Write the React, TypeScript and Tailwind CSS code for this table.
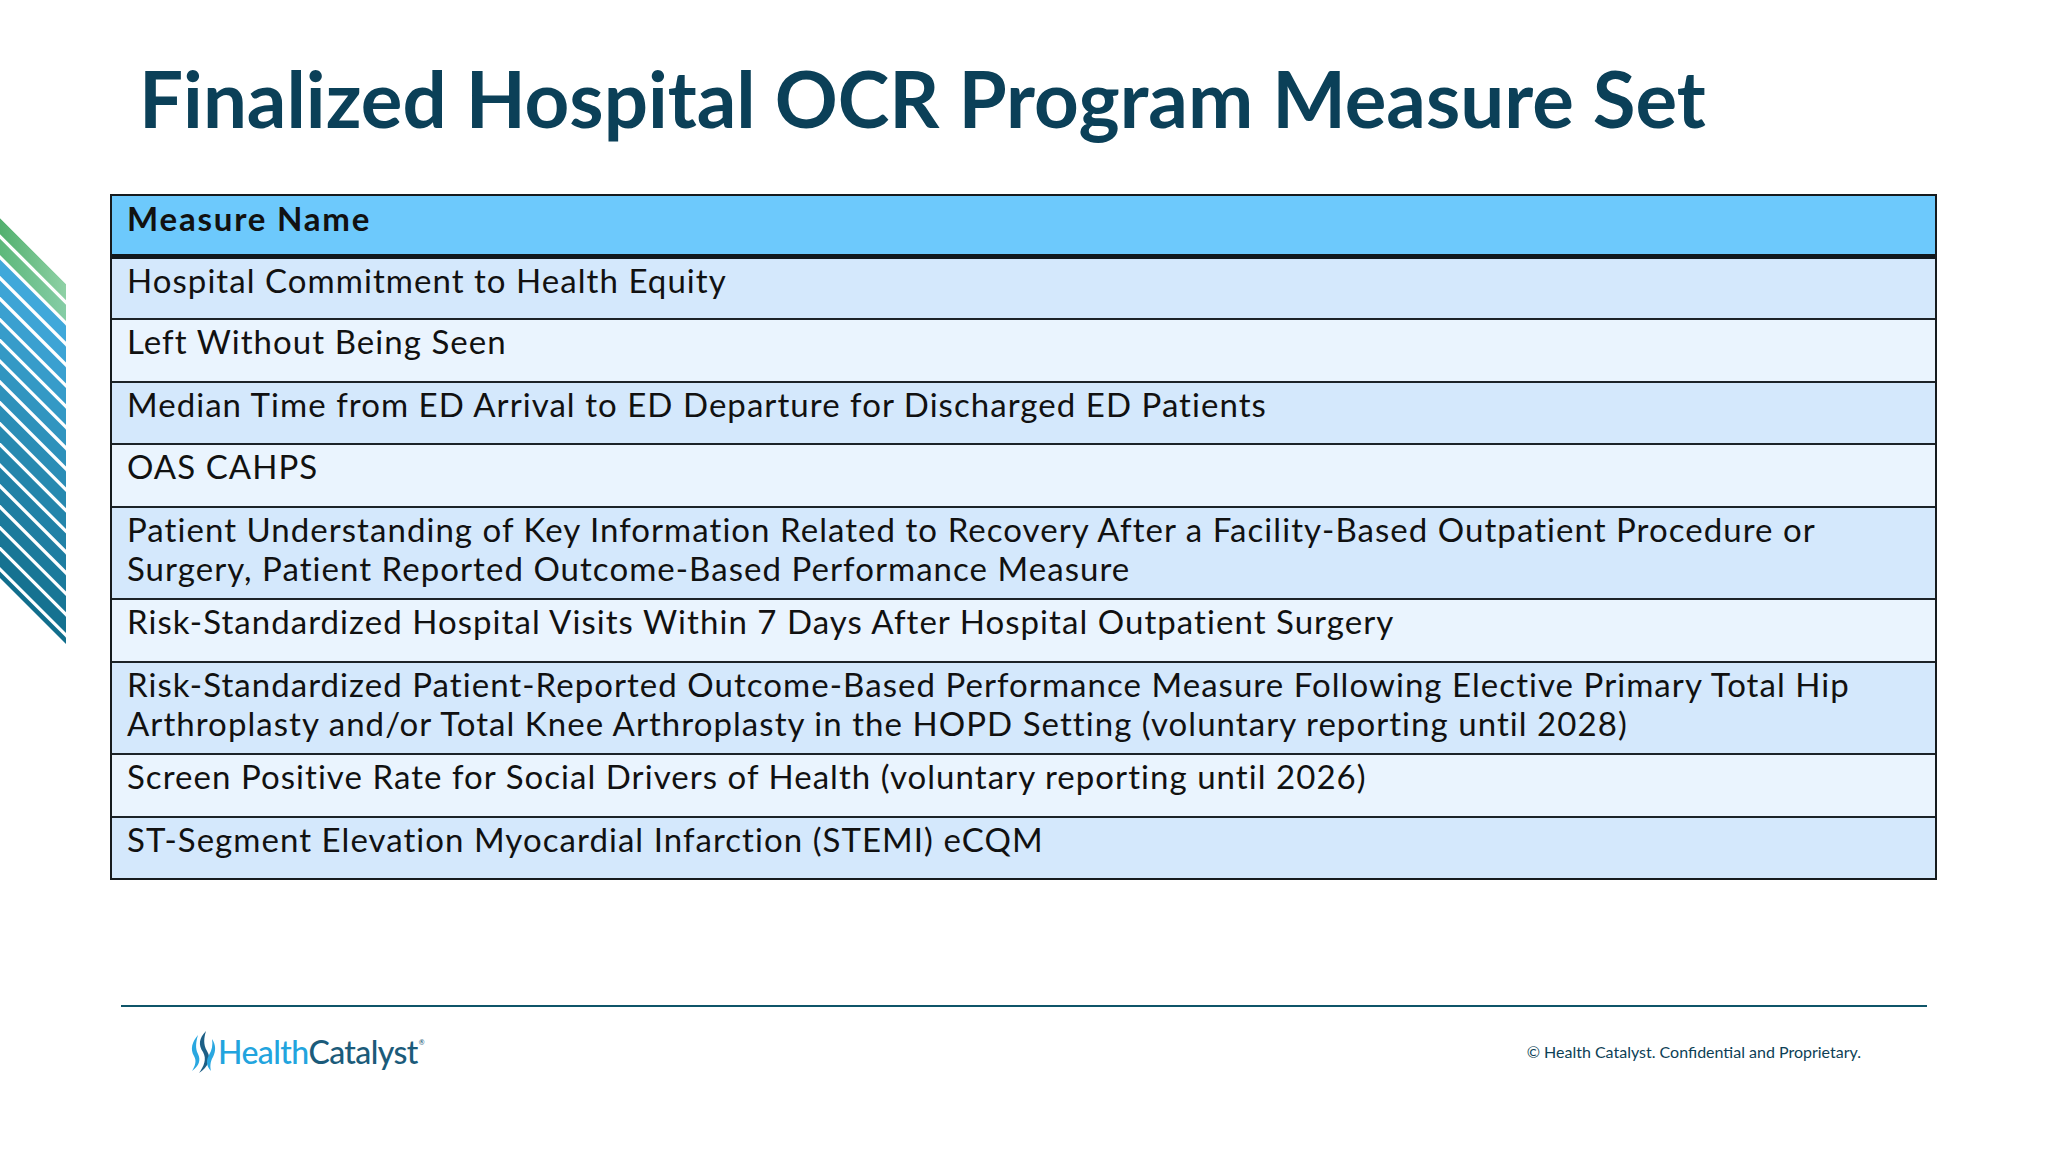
import React from "react";

const rows: string[][] = [
  ["Hospital Commitment to Health Equity"],
  ["Left Without Being Seen"],
  ["Median Time from ED Arrival to ED Departure for Discharged ED Patients"],
  ["OAS CAHPS"],
  [
    "Patient Understanding of Key Information Related to Recovery After a Facility-Based Outpatient Procedure or",
    "Surgery, Patient Reported Outcome-Based Performance Measure",
  ],
  ["Risk-Standardized Hospital Visits Within 7 Days After Hospital Outpatient Surgery"],
  [
    "Risk-Standardized Patient-Reported Outcome-Based Performance Measure Following Elective Primary Total Hip",
    "Arthroplasty and/or Total Knee Arthroplasty in the HOPD Setting (voluntary reporting until 2028)",
  ],
  ["Screen Positive Rate for Social Drivers of Health (voluntary reporting until 2026)"],
  ["ST-Segment Elevation Myocardial Infarction (STEMI) eCQM"],
];

function lerp(a: number, b: number, t: number) {
  return Math.round(a + (b - a) * t);
}
function mix(c1: number[], c2: number[], t: number) {
  return `rgb(${lerp(c1[0], c2[0], t)},${lerp(c1[1], c2[1], t)},${lerp(c1[2], c2[2], t)})`;
}

function Stripes() {
  const p = 20.8;
  const g = 4.6;
  const n = 19;
  const blueTop = [64, 168, 218];
  const blueBottom = [18, 110, 140];
  const stripes = [];
  for (let k = 0; k < n; k++) {
    const c = k * p;
    const pts = `0,${c} 66,${c + 66} 66,${c + 66 + p - g} 0,${c + p - g}`;
    let fill: string;
    if (k === 0) fill = "url(#g0)";
    else if (k === 1) fill = "url(#g1)";
    else fill = mix(blueTop, blueBottom, Math.min(1, (k - 2) / 15));
    stripes.push(<polygon key={k} points={pts} fill={fill} />);
  }
  return (
    <svg width="66" height="426" viewBox="0 0 66 426" className="shrink-0 mt-[24px]">
      <defs>
        <clipPath id="shape">
          <polygon points="0,0 66,66 66,426 0,360" />
        </clipPath>
        <linearGradient id="g0" x1="0" y1="0" x2="1" y2="0">
          <stop offset="0" stopColor="#52b06e" />
          <stop offset="1" stopColor="#8fd1a6" />
        </linearGradient>
        <linearGradient id="g1" x1="0" y1="0" x2="1" y2="0">
          <stop offset="0" stopColor="#5db87a" />
          <stop offset="1" stopColor="#86cda6" />
        </linearGradient>
      </defs>
      <g clipPath="url(#shape)">{stripes}</g>
    </svg>
  );
}

function Flame() {
  return (
    <svg width="28" height="42" viewBox="0 0 28 42" className="shrink-0">
      <path
        d="M9 4 C3 11, 1 18, 5 25 C8 30, 6 35, 3 40 C10 35, 12 29, 9 23 C6 17, 7 11, 9 4 Z"
        fill="#2aa7e0"
      />
      <path
        d="M17 0 C10 7, 9 14, 14 21 C18 28, 15 35, 10 42 C19 36, 23 28, 18 20 C14 13, 15 7, 17 0 Z"
        fill="#1d5f86"
      />
      <path
        d="M23 8 C27 14, 27 20, 24 26 C21 31, 21 36, 22 40 C17 35, 17 29, 20 24 C23 19, 24 14, 23 8 Z"
        fill="#2aa7e0"
      />
    </svg>
  );
}

export default function App() {
  return (
    <div className="w-[2048px] h-[1152px] bg-white flex flex-col overflow-hidden font-[family-name:Lato,sans-serif]">
      <h1 className="pt-[59px] pl-[139px] text-[78px] leading-[78px] font-bold text-[#0b4058] whitespace-nowrap">
        Finalized Hospital OCR Program Measure Set
      </h1>

      <div className="flex items-start mt-[57px]">
        <Stripes />
        <div className="ml-[44px] w-[1827px] border-2 border-[#161b1e] text-[33px] leading-[39px] tracking-[1.05px] text-[#111]">
          <div className="h-[63px] pt-[3px] pl-[15px] bg-[#6dc9fc] font-bold tracking-[1.8px] border-b-[5px] border-[#11181c]">
            Measure Name
          </div>
          {rows.map((lines, i) => (
            <div
              key={i}
              className={
                (i % 2 === 0 ? "bg-[#d4e8fc] " : "bg-[#eaf4fe] ") +
                (i === 0
                  ? "min-h-[59px] "
                  : i === 2 || i === 8
                  ? "border-t-2 border-[#1c2328] min-h-[62px] "
                  : "border-t-2 border-[#1c2328] min-h-[63px] ") +
                "pt-[2px] pb-[10px] pl-[15px] whitespace-nowrap"
              }
            >
              {lines.map((l, j) => (
                <div key={j}>{l}</div>
              ))}
            </div>
          ))}
        </div>
      </div>

      <div className="mt-[125px] ml-[121px] w-[1806px] h-[2px] bg-[#0f5569]" />

      <div className="flex items-center justify-between mt-[24px] pl-[189px] pr-[187px]">
        <div className="flex items-center">
          <Flame />
          <div className="ml-[1px] text-[32px] leading-[32px] tracking-[-0.6px] font-medium flex items-start">
            <span className="text-[#22a4de]">Health</span>
            <span className="text-[#1b5b7a]">Catalyst</span>
            <span className="text-[7px] leading-[7px] text-[#1b5b7a] mt-[3px] ml-[1px]">®</span>
          </div>
        </div>
        <div className="text-[16px] leading-[20px] text-[#0d3f56]">
          © Health Catalyst. Confidential and Proprietary.
        </div>
      </div>
    </div>
  );
}
